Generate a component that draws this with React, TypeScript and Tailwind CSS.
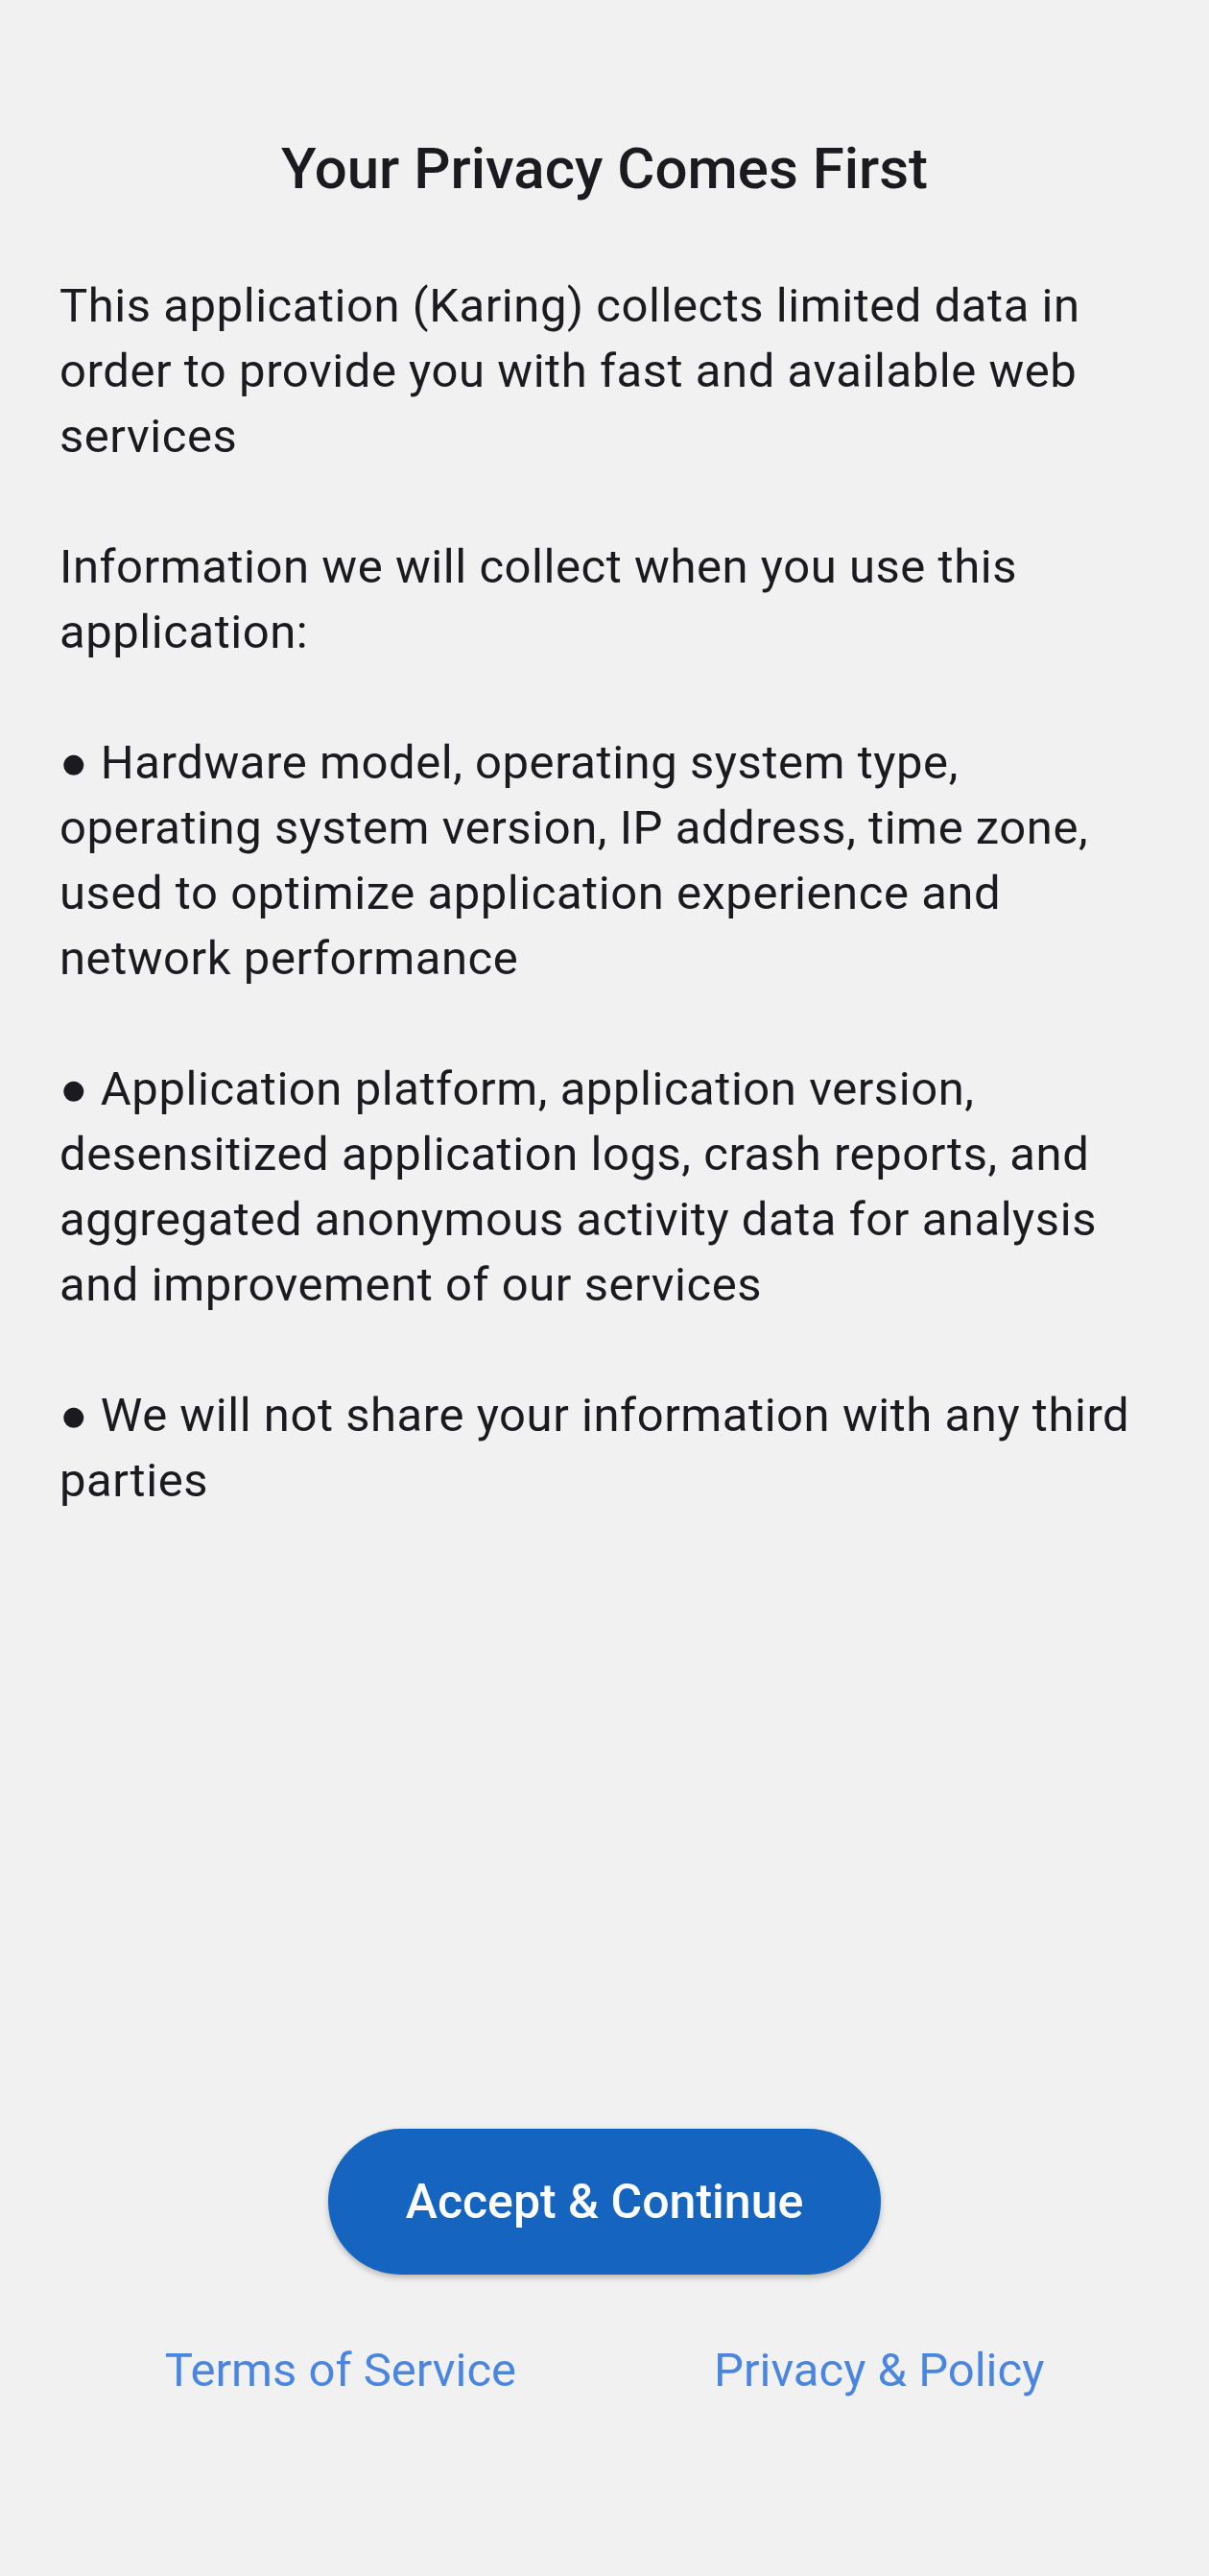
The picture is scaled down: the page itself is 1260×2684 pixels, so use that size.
const body = `This application (Karing) collects limited data in order to provide you with fast and available web services

Information we will collect when you use this application:

● Hardware model, operating system type, operating system version, IP address, time zone, used to optimize application experience and network performance

● Application platform, application version, desensitized application logs, crash reports, and aggregated anonymous activity data for analysis and improvement of our services

● We will not share your information with any third parties`;

export default function App() {
  return (
    <div
      className="flex min-h-screen flex-col bg-[#f1f1f1] text-[#1b1b1f]"
      style={{ fontFamily: "Roboto, 'Noto Sans', sans-serif" }}
    >
      <div className="px-[62px] pt-[138px]">
        <h1 className="text-center text-[60px] leading-[76px] font-medium">Your Privacy Comes First</h1>
        <p className="mt-[71px] whitespace-pre-line text-[49px] leading-[68px] tracking-[0.55px]">{body}</p>
      </div>

      <div className="flex-1" />

      <div className="flex flex-col items-center pb-[184px]">
        <button className="h-[152px] w-[576px] rounded-full bg-[#1565c0] text-[50px] font-medium text-white shadow-[0_3px_6px_rgba(0,0,0,0.25)]">
          Accept &amp; Continue
        </button>
        <div className="mt-[70px] flex justify-center gap-[206px] text-[49px] leading-[60px] text-[#4a86e0]">
          <a>Terms of Service</a>
          <a>Privacy &amp; Policy</a>
        </div>
      </div>
    </div>
  );
}
